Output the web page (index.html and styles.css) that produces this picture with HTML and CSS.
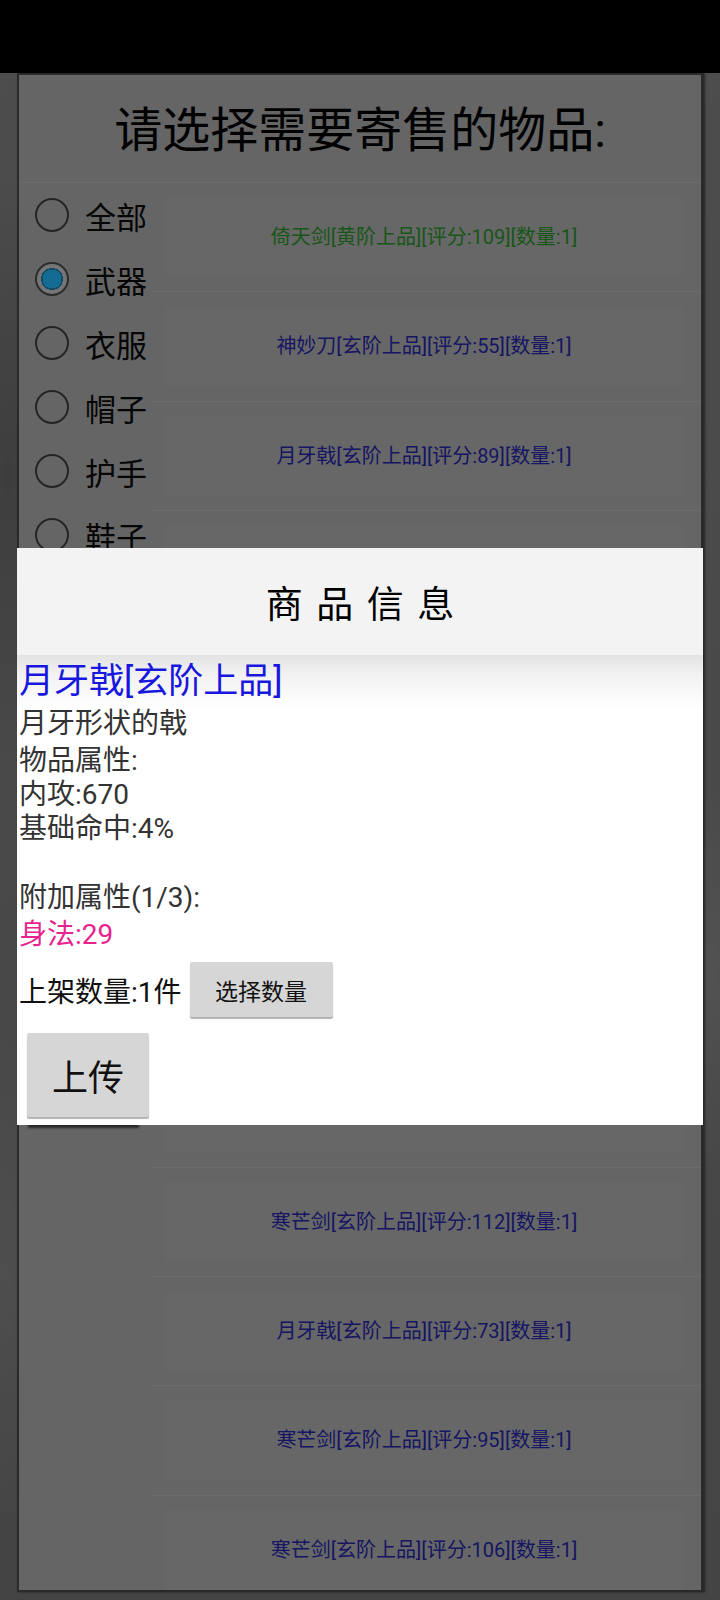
FILE: index.html
```html
<!DOCTYPE html>
<html lang="zh-CN">
<head>
<meta charset="utf-8">
<title>寄售</title>
<link rel="stylesheet" href="styles.css">
</head>
<body>
<div class="statusbar"></div>
<div class="screen">
  <div class="panel">
    <div class="panel-title">请选择需要寄售的物品:</div>
    <div class="panel-body">
      <div class="filters">
        <div class="radio"><span class="dot"></span>全部</div>
        <div class="radio checked"><span class="dot"></span>武器</div>
        <div class="radio"><span class="dot"></span>衣服</div>
        <div class="radio"><span class="dot"></span>帽子</div>
        <div class="radio"><span class="dot"></span>护手</div>
        <div class="radio"><span class="dot"></span>鞋子</div>
        <div class="radio"><span class="dot"></span>腰带</div>
        <div class="radio"><span class="dot"></span>项链</div>
        <div class="radio"><span class="dot"></span>戒指</div>
        <div class="back-btn"></div>
      </div>
      <div class="items">
        <div class="item"><div class="card green">倚天剑[黄阶上品][评分:109][数量:1]</div></div>
        <div class="item"><div class="card">神妙刀[玄阶上品][评分:55][数量:1]</div></div>
        <div class="item"><div class="card">月牙戟[玄阶上品][评分:89][数量:1]</div></div>
        <div class="item"><div class="card">寒芒剑[玄阶上品][评分:98][数量:1]</div></div>
        <div class="item"><div class="card">神妙刀[玄阶上品][评分:62][数量:1]</div></div>
        <div class="item"><div class="card">月牙戟[玄阶上品][评分:101][数量:1]</div></div>
        <div class="item"><div class="card">神妙刀[玄阶上品][评分:77][数量:1]</div></div>
        <div class="item"><div class="card">寒芒剑[玄阶上品][评分:84][数量:1]</div></div>
        <div class="item"><div class="card">月牙戟[玄阶上品][评分:66][数量:1]</div></div>
        <div class="item"><div class="card">寒芒剑[玄阶上品][评分:112][数量:1]</div></div>
        <div class="item"><div class="card">月牙戟[玄阶上品][评分:73][数量:1]</div></div>
        <div class="item"><div class="card">寒芒剑[玄阶上品][评分:95][数量:1]</div></div>
        <div class="item"><div class="card">寒芒剑[玄阶上品][评分:106][数量:1]</div></div>
      </div>
    </div>
  </div>
</div>
<div class="scrim"></div>
<div class="dialog">
  <div class="dialog-title">商品信息</div>
  <div class="dialog-body">
    <div class="item-name">月牙戟[玄阶上品]</div>
    <div class="desc">月牙形状的戟</div>
    <div class="attrs">物品属性:<br>内攻:670<br>基础命中:4%<br><br>附加属性(1/3):</div>
    <div class="extra">身法:29</div>
    <div class="qty-row">
      <span class="qty-text">上架数量:1件</span>
      <span class="btn qty-btn">选择数量</span>
    </div>
    <div class="btn upload-btn">上传</div>
  </div>
</div>
</body>
</html>
```
FILE: styles.css
```css
html, body {
  margin: 0;
  padding: 0;
}
body {
  width: 720px;
  height: 1600px;
  overflow: hidden;
  background: #000;
  font-family: Roboto, "Noto Sans CJK SC", sans-serif;
  color: #000;
}
.statusbar {
  height: 73px;
  background: #000;
}
.screen {
  box-sizing: border-box;
  height: 1527px;
  padding: 0 16px 8px 17px;
  background:
    radial-gradient(ellipse 60px 300px at 8px 400px, rgba(0,0,0,0.18), transparent),
    radial-gradient(ellipse 40px 200px at 712px 900px, rgba(255,255,255,0.12), transparent),
    radial-gradient(ellipse 50px 260px at 6px 1200px, rgba(255,255,255,0.10), transparent),
    linear-gradient(180deg, #808080, #7a7a7a 50%, #727272);
}
.panel {
  box-sizing: border-box;
  height: 1519px;
  border: 2px solid #474747;
  border-right-width: 3px;
  background: #a8a8a8;
  overflow: hidden;
  box-shadow: 1px 0 2px rgba(0,0,0,0.5);
}
.panel-title {
  box-sizing: border-box;
  height: 108px;
  padding-top: 4px;
  display: flex;
  align-items: center;
  justify-content: center;
  font-size: 48px;
  line-height: 1;
  color: #000;
  border-bottom: 1px solid #b2b2b2;
}
.panel-body {
  display: grid;
  grid-template-columns: 132px 1fr;
}
.filters {
  display: flex;
  flex-direction: column;
}
.radio {
  height: 64px;
  display: flex;
  align-items: center;
  gap: 16px;
  padding-left: 16px;
  font-size: 31px;
  color: #0a0a0a;
}
.dot {
  flex: none;
  box-sizing: border-box;
  width: 34px;
  height: 34px;
  border-radius: 50%;
  border: 2px solid #3e3e3e;
}
.checked .dot {
  border-color: #4a4a4a;
  background: radial-gradient(circle, #23b4f5 0 9.5px, #1b7fae 9.5px 11px, #c4c4c4 11px);
}
.back-btn {
  box-sizing: border-box;
  margin: 291px 0 0 9px;
  width: 111px;
  height: 75px;
  background: #d6d6d6;
  box-shadow: 0 3px 2px rgba(0,0,0,0.6);
}
.items {
  display: flex;
  flex-direction: column;
}
.item {
  padding: 14px 16px 14.4px 12px;
  border-bottom: 1px solid #b2b2b2;
}
.card {
  height: 80px;
  border-radius: 8px;
  background: #acacac;
  display: flex;
  align-items: center;
  justify-content: center;
  font-size: 20px;
  line-height: 1;
  color: #2626a4;
}
.card.green {
  color: #2a8f2a;
}
.scrim {
  position: fixed;
  inset: 0;
  background: rgba(0,0,0,0.4);
}
.dialog {
  position: absolute;
  left: 17px;
  top: 548px;
  width: 686px;
  background: #fff;
}
.dialog-title {
  height: 107px;
  background: #f3f3f3;
  display: flex;
  align-items: center;
  justify-content: center;
  font-size: 37px;
  letter-spacing: 13.5px;
  text-indent: 13.5px;
  color: #000;
  position: relative;
  z-index: 1;
}
.dialog-body {
  padding: 0 2px 8px;
  background:
    linear-gradient(180deg, rgba(0,0,0,0.11), rgba(0,0,0,0.05) 20px, rgba(0,0,0,0) 55px),
    #fff;
}
.item-name {
  padding-top: 5px;
  font-size: 35px;
  line-height: 44px;
  color: #1717dd;
}
.desc {
  margin-top: 2px;
  font-size: 28px;
  line-height: 36px;
  color: #333;
}
.attrs {
  margin-top: 2px;
  font-size: 28px;
  line-height: 34.2px;
  color: #333;
}
.extra {
  margin-top: 3px;
  font-size: 28px;
  line-height: 34px;
  color: #e8238e;
}
.qty-row {
  margin-top: 10px;
  height: 55px;
  display: flex;
  align-items: center;
}
.qty-text {
  font-size: 28px;
  color: #111;
}
.btn {
  box-sizing: border-box;
  display: flex;
  align-items: center;
  justify-content: center;
  background: #d6d6d6;
  border-radius: 2px;
  box-shadow: 0 2px 1px rgba(0,0,0,0.3);
  color: #111;
}
.qty-btn {
  margin-left: 8px;
  width: 143px;
  height: 55px;
  font-size: 23px;
}
.upload-btn {
  margin: 16px 0 0 8px;
  width: 122px;
  height: 84px;
  font-size: 36px;
}
```
